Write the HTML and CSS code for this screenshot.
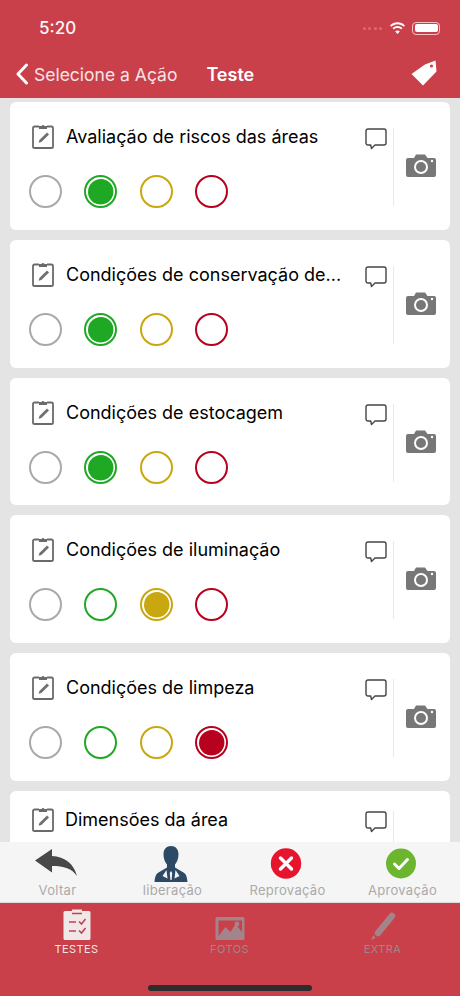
FILE: index.html
```html
<!DOCTYPE html>
<html lang="pt">
<head>
<meta charset="utf-8">
<title>Teste</title>
<link rel="stylesheet" href="styles.css">
</head>
<body>
<svg class="defs" width="0" height="0" aria-hidden="true">
  <symbol id="clip" viewBox="0 0 22 26">
    <path d="M7 3.500H2.600A1.600 1.600 0 0 0 1 5.100v18.300A1.600 1.600 0 0 0 2.600 25h16.800a1.600 1.600 0 0 0 1.600-1.600V5.100A1.600 1.600 0 0 0 19.400 3.500H15" fill="none" stroke="#6a6a6a" stroke-width="1.800"/>
    <path d="M7 6V3h2.500a1.700 1.700 0 0 1 3 0H15v3z" fill="#6a6a6a"/>
    <path d="M15 9.500l2 2-7.600 7.500-2.800.8.800-2.800z" fill="#707070"/>
  </symbol>
  <symbol id="bubble" viewBox="0 0 22 22">
    <path d="M3 1h16a2 2 0 0 1 2 2v12a2 2 0 0 1-2 2H10l-3.500 3.500-.8-3.500H3a2 2 0 0 1-2-2V3a2 2 0 0 1 2-2z" fill="none" stroke="#444" stroke-width="1.400" stroke-linejoin="round"/>
  </symbol>
  <symbol id="cam" viewBox="0 0 30 23">
    <path d="M2 4h6l2-3.500h9L21.500 4H28a2 2 0 0 1 2 2v15a2 2 0 0 1-2 2H2a2 2 0 0 1-2-2V6a2 2 0 0 1 2-2z" fill="#777"/>
    <circle cx="15" cy="13" r="7" fill="#fff"/>
    <circle cx="15" cy="13" r="5" fill="#777"/>
    <circle cx="26" cy="7" r="1.200" fill="#fff"/>
  </symbol>
</svg>

<header class="top">
  <div class="status">
    <span class="time">5:20</span>
    <div class="status-icons">
      <span class="signal"><i></i><i></i><i></i><i></i></span>
      <svg class="wifi" viewBox="0 0 17 12"><path d="M8.500 2.300c2.400 0 4.600 1 6.200 2.500L16 3.400C14 1.400 11.400.2 8.500.2S3 1.400 1 3.400l1.300 1.400c1.600-1.500 3.800-2.500 6.200-2.500z" fill="#fff"/><path d="M8.500 6c1.400 0 2.600.5 3.600 1.400l1.300-1.400C12.100 4.800 10.400 4 8.500 4S4.900 4.800 3.600 6l1.300 1.400C5.900 6.500 7.100 6 8.500 6z" fill="#fff"/><path d="M8.500 12l2.300-2.500c-.6-.6-1.400-.9-2.300-.9s-1.700.3-2.300.9z" fill="#fff"/></svg>
      <span class="battery"><b></b></span>
    </div>
  </div>
  <nav class="nav">
    <svg class="chev" viewBox="0 0 14 22"><path d="M11.500 2L3 11l8.500 9" fill="none" stroke="#fff" stroke-width="3" stroke-linecap="round" stroke-linejoin="round"/></svg>
    <span class="back">Selecione a Ação</span>
    <span class="title">Teste</span>
    <svg class="tag" viewBox="0 0 26 26"><path d="M14 4.500L24.500 .5 25.500 11.500 12 25.500 .5 14z" fill="#fff"/><circle cx="20.500" cy="6" r="1.600" fill="#c9404a"/></svg>
  </nav>
</header>

<main class="list">
  <section class="card">
    <div class="main">
      <div class="head"><svg class="ic-clip"><use href="#clip"/></svg><h2>Avaliação de riscos das áreas</h2><svg class="ic-bubble"><use href="#bubble"/></svg></div>
      <div class="opts"><i class="o grey"></i><i class="o green on"></i><i class="o yellow"></i><i class="o red"></i></div>
    </div>
    <div class="side"><div class="rule"></div><svg class="ic-cam"><use href="#cam"/></svg></div>
  </section>
  <section class="card">
    <div class="main">
      <div class="head"><svg class="ic-clip"><use href="#clip"/></svg><h2>Condições de conservação de...</h2><svg class="ic-bubble"><use href="#bubble"/></svg></div>
      <div class="opts"><i class="o grey"></i><i class="o green on"></i><i class="o yellow"></i><i class="o red"></i></div>
    </div>
    <div class="side"><div class="rule"></div><svg class="ic-cam"><use href="#cam"/></svg></div>
  </section>
  <section class="card">
    <div class="main">
      <div class="head"><svg class="ic-clip"><use href="#clip"/></svg><h2>Condições de estocagem</h2><svg class="ic-bubble"><use href="#bubble"/></svg></div>
      <div class="opts"><i class="o grey"></i><i class="o green on"></i><i class="o yellow"></i><i class="o red"></i></div>
    </div>
    <div class="side"><div class="rule"></div><svg class="ic-cam"><use href="#cam"/></svg></div>
  </section>
  <section class="card">
    <div class="main">
      <div class="head"><svg class="ic-clip"><use href="#clip"/></svg><h2>Condições de iluminação</h2><svg class="ic-bubble"><use href="#bubble"/></svg></div>
      <div class="opts"><i class="o grey"></i><i class="o green"></i><i class="o yellow on"></i><i class="o red"></i></div>
    </div>
    <div class="side"><div class="rule"></div><svg class="ic-cam"><use href="#cam"/></svg></div>
  </section>
  <section class="card">
    <div class="main">
      <div class="head"><svg class="ic-clip"><use href="#clip"/></svg><h2>Condições de limpeza</h2><svg class="ic-bubble"><use href="#bubble"/></svg></div>
      <div class="opts"><i class="o grey"></i><i class="o green"></i><i class="o yellow"></i><i class="o red on"></i></div>
    </div>
    <div class="side"><div class="rule"></div><svg class="ic-cam"><use href="#cam"/></svg></div>
  </section>
  <section class="card card-raised">
    <div class="main">
      <div class="head"><svg class="ic-clip"><use href="#clip"/></svg><h2>Dimensões da área</h2><svg class="ic-bubble"><use href="#bubble"/></svg></div>
    </div>
    <div class="side"><div class="rule"></div></div>
  </section>
</main>

<div class="actions">
  <div class="action">
    <svg class="act-ic" width="42" height="36" viewBox="0 0 42 36"><path d="M0 15.500L17 4v7c13 .5 22 8 25 20-5-7.500-13-10-25-10v6.500z" fill="#484848"/></svg>
    <span>Voltar</span>
  </div>
  <div class="action">
    <svg class="act-ic" width="36" height="37" viewBox="0 0 36 37"><path d="M18 1c4.500 0 7.500 3 7.500 8.500 0 4.500-1.800 8-3.500 10v3l8.500 5c3 1.500 3.500 5 4 9.500H1.500c.5-4.500 1-8 4-9.500l8.500-5v-3c-1.700-2-3.500-5.500-3.500-10C10.500 4 13.500 1 18 1z" fill="#2c4a66"/><path d="M13.500 25l-4 6 5 2.500zM22.500 25l4 6-5 2.500zM18 26l-1.200 2 .6 7h1.200l.6-7z" fill="#f5f5f5"/></svg>
    <span class="lbl-tight">liberação</span>
  </div>
  <div class="action">
    <svg class="act-ic" width="36" height="36" viewBox="0 0 36 36"><circle cx="18" cy="18.500" r="15.200" fill="#e5142f"/><path d="M12.500 13l11 11M23.500 13l-11 11" stroke="#fff" stroke-width="3.400" stroke-linecap="round"/></svg>
    <span>Reprovação</span>
  </div>
  <div class="action">
    <svg class="act-ic" width="36" height="36" viewBox="0 0 36 36"><circle cx="18" cy="18.500" r="15" fill="#6bb52f"/><path d="M11.500 19l4.500 4.500 8.500-9" fill="none" stroke="#fff" stroke-width="3" stroke-linecap="round" stroke-linejoin="round"/></svg>
    <span>Aprovação</span>
  </div>
</div>

<footer class="tabs">
  <div class="tab-row">
    <div class="tab active">
      <svg class="tab-ic" width="28" height="32" viewBox="0 0 28 32"><path d="M2 3h7V1.500h10V3h7a1.500 1.500 0 0 1 1.500 1.500v26A1.500 1.500 0 0 1 26 32H2a1.500 1.500 0 0 1-1.500-1.500v-26A1.500 1.500 0 0 1 2 3z" fill="#f0e8e8"/><path d="M9 5.500h10M6 14h7M6 23h7M16 13.500l2.500 2.500 4-5M16 22.500l2.500 2.500 4-5" fill="none" stroke="#c9404a" stroke-width="1.600"/></svg>
      <span>TESTES</span>
    </div>
    <div class="tab">
      <svg class="tab-ic" width="32" height="32" viewBox="0 0 32 32"><rect x="1.500" y="9" width="29" height="23" rx="1.500" fill="#a3848a"/><path d="M4.500 28l7-9 5 5 5-8 6.500 8V12.500h-23.500z" fill="#c9404a"/><circle cx="23" cy="16" r="2.400" fill="#a3848a"/></svg>
      <span>FOTOS</span>
    </div>
    <div class="tab">
      <svg class="tab-ic" width="32" height="32" viewBox="0 0 32 32"><path d="M11 25L25 8" fill="none" stroke="#a3848a" stroke-width="6.500" stroke-linecap="round"/><path d="M4 32l4.500-2-2-3z" fill="#a3848a"/></svg>
      <span>EXTRA</span>
    </div>
  </div>
  <div class="home"></div>
</footer>
</body>
</html>
```

FILE: styles.css
```css
* { box-sizing: border-box; }
html, body { margin: 0; padding: 0; }
body {
  width: 460px;
  height: 996px;
  display: flex;
  flex-direction: column;
  overflow: hidden;
  background: #e4e4e4;
  font-family: Inter, "Liberation Sans", sans-serif;
}
.defs { position: absolute; }

.top { height: 98px; flex: none; background: #c9404a; color: #fff; }
.status { height: 44px; display: flex; align-items: center; justify-content: space-between; padding: 12px 20px 0 39px; }
.time { font-size: 17px; font-weight: 500; opacity: .95; }
.status-icons { display: flex; align-items: center; }
.signal { display: flex; gap: 2.500px; margin-right: 7px; opacity: .5; }
.signal i { width: 3px; height: 3px; border-radius: 50%; background: #e39aa0; }
.wifi { width: 17px; height: 12px; margin-right: 6px; }
.battery { width: 28px; height: 13px; border: 1px solid #f0c4c7; border-radius: 4px; padding: 1.500px; display: block; }
.battery b { display: block; height: 100%; background: #fff; border-radius: 2px; }

.nav { height: 54px; display: flex; align-items: center; padding: 6px 23px 0 15px; }
.chev { width: 14px; height: 22px; margin-right: 5px; flex: none; }
.back { font-size: 17.500px; font-weight: 400; color: #f6e4e5; white-space: nowrap; }
.title { font-size: 18px; font-weight: 600; margin-left: 29px; }
.tag { width: 26px; height: 26px; margin-left: auto; margin-top: -2px; }

.list {
  flex: 1;
  min-height: 0;
  overflow: hidden;
  padding: 4px 10px 0;
  display: flex;
  flex-direction: column;
  gap: 10px;
}
.card { flex: none; height: 127.800px; display: flex; background: #fff; border-radius: 6px; }
.main { width: 383px; }
.head { display: flex; align-items: flex-start; padding: 21px 0 0 22px; height: 72px; }
.ic-clip { width: 22px; height: 26px; flex: none; }
.head h2 { margin: 2px 0 0 12px; flex: 1; font-size: 18px; line-height: 24px; font-weight: 400; color: #000; white-space: nowrap; overflow: hidden; }
.ic-bubble { width: 22px; height: 22px; flex: none; margin: 5px 6px 0 0; }
.opts { display: flex; gap: 22.400px; padding-left: 19px; margin-top: 1px; }
.o { width: 33px; height: 33px; border-radius: 50%; border: 2px solid; display: block; flex: none; background: #fff; }
.o.on { padding: 1.500px; background-clip: content-box; box-shadow: inset 0 0 0 1.500px #fff; }
.grey { border-color: #a9a9a9; }
.green { border-color: #1fa824; }
.yellow { border-color: #c9a70e; }
.red { border-color: #b8001f; }
.green.on { background-color: #1fa824; }
.yellow.on { background-color: #c9a70e; }
.red.on { background-color: #b8001f; }

.side { flex: 1; display: flex; }
.rule { width: 1px; height: 78px; margin-top: 26px; background: #e9e9e9; flex: none; }
.ic-cam { width: 30px; height: 23px; margin: 52px 0 0 12px; flex: none; }

.card-raised .head { padding-top: 15px; }
.card-raised .head h2 { margin-left: 11px; }
.card-raised .rule { margin-top: 20px; }

.actions {
  flex: none;
  height: 61px;
  background: #f5f5f5;
  display: grid;
  grid-template-columns: repeat(4, 115px);
  border-bottom: 1px solid #ddd;
}
.action { display: flex; flex-direction: column; align-items: center; padding-top: 3px; }
.act-ic { flex: none; display: block; margin-right: 3px; }
.action span { font-size: 13px; line-height: 16px; color: #aaa; letter-spacing: .3px; margin-top: 1px; }
.action .lbl-tight { margin-top: 0; }

.tabs { flex: none; height: 93px; background: #c9404a; display: flex; flex-direction: column; }
.tab-row { display: grid; grid-template-columns: repeat(3, 153px); padding-top: 5px; }
.tab { display: flex; flex-direction: column; align-items: center; }
.tab-ic { display: block; flex: none; overflow: visible; }
.tab span { font-size: 11px; line-height: 14px; letter-spacing: .4px; margin-top: 2px; color: #a3848a; }
.tab.active span { color: #f4e6e7; }
.home { width: 164px; height: 6px; border-radius: 3px; background: #2d2d2d; margin: 29px auto 0; }
```
